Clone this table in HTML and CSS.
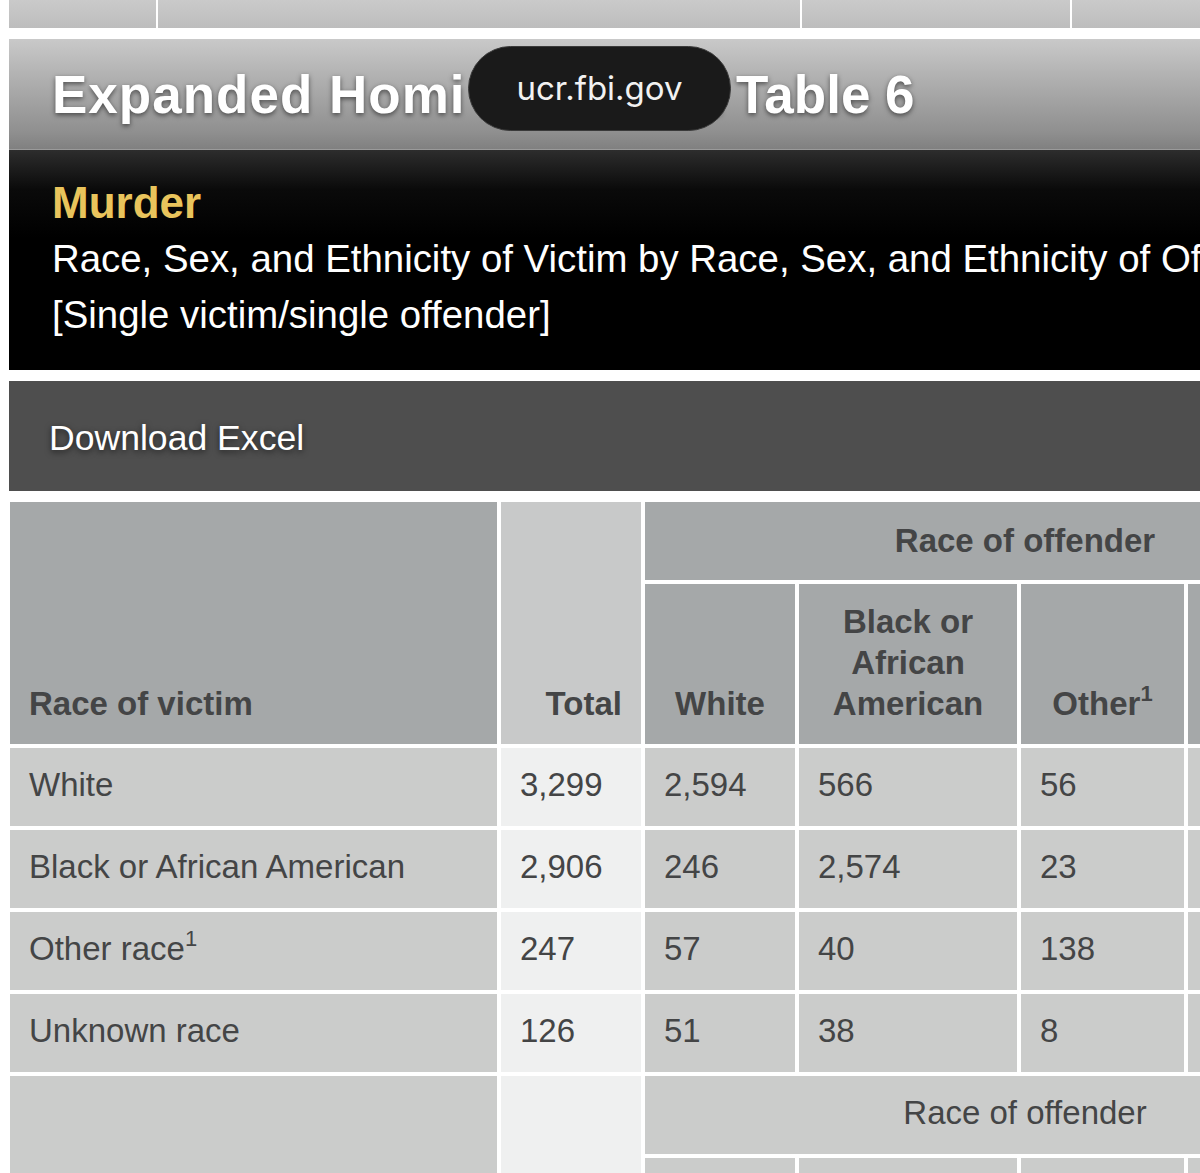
FILE: index.html
```html
<!DOCTYPE html>
<html lang="en">
<head>
<meta charset="utf-8">
<title>Expanded Homicide Data Table 6</title>
<link rel="stylesheet" href="styles.css">
</head>
<body>
<div class="page">
  <div class="topstrip">
    <div class="ts-cell ts-a"></div>
    <div class="ts-cell ts-b"></div>
    <div class="ts-cell ts-c"></div>
    <div class="ts-cell ts-d"></div>
  </div>

  <header class="titlebar">
    <h1 class="title"><span class="lead-part">Expanded Homi</span><span class="hidden-part">cide Data </span>Table 6</h1>
    <div class="urlpill">ucr.fbi.gov</div>
  </header>

  <section class="caption">
    <div class="crime">Murder</div>
    <div class="subtitle">Race, Sex, and Ethnicity of Victim by Race, Sex, and Ethnicity of Offender</div>
    <div class="subtitle">[Single victim/single offender]</div>
  </section>

  <div class="download">Download Excel</div>

  <table class="data">
    <colgroup>
      <col class="c1"><col class="c2"><col class="c3"><col class="c4"><col class="c5"><col class="c6">
    </colgroup>
    <thead>
      <tr class="h1row">
        <th class="hd hd-left" rowspan="2">Race of victim</th>
        <th class="hd hd-total" rowspan="2">Total</th>
        <th class="hd hd-group" colspan="4">Race of offender</th>
      </tr>
      <tr class="h2row">
        <th class="hd hd-center">White</th>
        <th class="hd hd-center">Black or<br>African<br>American</th>
        <th class="hd hd-center">Other<sup>1</sup></th>
        <th class="hd hd-center">Unknown</th>
      </tr>
    </thead>
    <tbody>
      <tr class="drow">
        <td class="cell label">White</td><td class="cell total">3,299</td><td class="cell">2,594</td><td class="cell">566</td><td class="cell">56</td><td class="cell">83</td>
      </tr>
      <tr class="drow">
        <td class="cell label">Black or African American</td><td class="cell total">2,906</td><td class="cell">246</td><td class="cell">2,574</td><td class="cell">23</td><td class="cell">63</td>
      </tr>
      <tr class="drow">
        <td class="cell label">Other race<sup>1</sup></td><td class="cell total">247</td><td class="cell">57</td><td class="cell">40</td><td class="cell">138</td><td class="cell">12</td>
      </tr>
      <tr class="drow">
        <td class="cell label">Unknown race</td><td class="cell total">126</td><td class="cell">51</td><td class="cell">38</td><td class="cell">8</td><td class="cell">29</td>
      </tr>
      <tr class="drow">
        <td class="cell label" rowspan="2"></td><td class="cell total" rowspan="2"></td>
        <td class="cell subgroup" colspan="4">Race of offender</td>
      </tr>
      <tr class="drow">
        <td class="cell"></td><td class="cell"></td><td class="cell"></td><td class="cell"></td>
      </tr>
    </tbody>
  </table>
</div>
</body>
</html>
```

FILE: styles.css
```css
html, body {
  margin: 0;
  padding: 0;
  background: #ffffff;
  overflow: hidden;
}

body {
  font-family: "Liberation Sans", Arial, Helvetica, sans-serif;
  width: 1200px;
  height: 1173px;
}

.page {
  width: 1600px;
  padding-left: 9px;
}

/* top strip (bottom of previous table) */
.topstrip {
  display: flex;
  height: 28px;
  gap: 2px;
}

.ts-cell {
  height: 28px;
  background: linear-gradient(#cacaca, #bdbdbd);
}

.ts-a { width: 147px; }
.ts-b { width: 642px; }
.ts-c { width: 268px; }
.ts-d { flex: 1; }

/* title bar */
.titlebar {
  position: relative;
  margin-top: 11px;
  height: 110px;
  background: linear-gradient(#c9c9c9 0%, #b4b4b4 30%, #8f8f8f 85%, #808080 100%);
  border-bottom: 1px solid #9a9a9a;
}

.title {
  margin: 0;
  padding: 24px 0 0 43px;
  font-size: 53px;
  font-weight: 700;
  line-height: 64px;
  color: #ffffff;
  text-shadow: 0 2px 5px rgba(0, 0, 0, 0.55);
  white-space: nowrap;
}

.lead-part {
  letter-spacing: 1px;
}

.hidden-part {
  margin-left: 18px;
  letter-spacing: 0.2px;
}

.urlpill {
  position: absolute;
  left: 459px;
  top: 7px;
  width: 263px;
  height: 85px;
  box-sizing: border-box;
  border-radius: 43px;
  background: #1a1a1a;
  border: 1px solid #3a3a3a;
  color: #f2f2f2;
  font-family: Inter, "Open Sans", sans-serif;
  font-size: 33px;
  display: flex;
  align-items: center;
  justify-content: center;
  padding-bottom: 2px;
}

/* black caption block */
.caption {
  height: 220px;
  box-sizing: border-box;
  background: linear-gradient(#2d2d2d 0%, #0a0a0a 18%, #000000 40%, #000000 100%);
  padding: 25px 0 0 43px;
  white-space: nowrap;
  overflow: hidden;
}

.crime {
  color: #e9c45c;
  font-size: 44px;
  font-weight: 700;
  line-height: 56px;
}

.subtitle {
  color: #ffffff;
  font-size: 38.4px;
  line-height: 56px;
}

/* download bar */
.download {
  margin-top: 11px;
  height: 110px;
  box-sizing: border-box;
  background: #4e4e4e;
  color: #ffffff;
  font-size: 35.6px;
  padding: 37px 0 0 40px;
  line-height: 40px;
  text-shadow: 0 2px 6px rgba(0, 0, 0, 0.6);
}

/* table */
.data {
  margin-top: 7px;
  margin-left: -3px;
  border-collapse: separate;
  border-spacing: 4px;
  table-layout: fixed;
  width: 1403px;
  color: #444546;
}

.c1 { width: 487px; }
.c2 { width: 140px; }
.c3 { width: 150px; }
.c4 { width: 218px; }
.c5 { width: 163px; }
.c6 { width: 217px; }

.hd {
  background: #a5a8a9;
  font-size: 33px;
  font-weight: 700;
  line-height: 41px;
  vertical-align: bottom;
  padding: 0 19px 20px 19px;
}

.h1row { height: 78px; }
.h2row { height: 160px; }

.hd-left { text-align: left; }

.hd-total {
  background: #c8c9c9;
  text-align: right;
}

.hd-group {
  text-align: center;
  vertical-align: middle;
  padding: 0 0 2px 0;
}

.hd-center {
  text-align: center;
  padding-left: 4px;
  padding-right: 4px;
}

.hd sup, .cell sup {
  font-size: 22px;
  line-height: 0;
  vertical-align: 14px;
}

.drow { height: 78px; }

.cell {
  background: #cbcccb;
  font-size: 33px;
  line-height: 40px;
  padding: 0 0 4px 19px;
  text-align: left;
  vertical-align: middle;
}

.cell.total {
  background: #eff0f0;
}

.cell.subgroup {
  text-align: center;
  padding-left: 0;
}
```
